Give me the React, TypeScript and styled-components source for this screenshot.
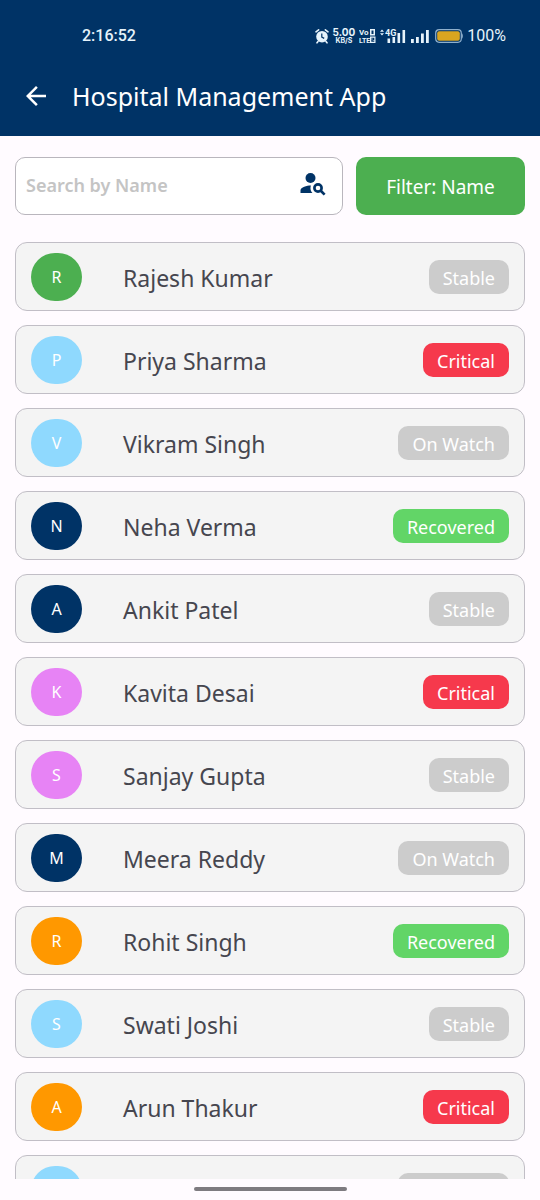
import React, { useState } from 'react';
import styled, { createGlobalStyle } from 'styled-components';
import { MdArrowBack } from 'react-icons/md';

const GlobalStyle = createGlobalStyle`
  *, *::before, *::after { box-sizing: border-box; }
  body {
    margin: 0;
    background: #fffbff;
    font-family: 'Noto Sans', 'Open Sans', sans-serif;
  }
`;

const Screen = styled.div`
  display: flex;
  flex-direction: column;
  height: 100vh;
  overflow: hidden;
`;

const Header = styled.header`
  flex: none;
  background: #003366;
  color: #ffffff;
`;

const StatusBar = styled.div`
  display: flex;
  align-items: center;
  justify-content: space-between;
  height: 56px;
  padding: 16px 34px 0 82px;
  font-family: Roboto, sans-serif;
  font-size: 16px;
  line-height: 20px;
  color: #e6f3fb;
`;

const Clock = styled.span`
  font-weight: 500;
`;

const StatusIcons = styled.div`
  display: flex;
  align-items: center;
  gap: 4px;
`;

const Speed = styled.div`
  display: flex;
  flex-direction: column;
  align-items: center;
  font-family: Inter, sans-serif;
  font-weight: 700;
  font-size: 7px;
  line-height: 7px;
`;

const SpeedValue = styled.span`
  font-size: 10px;
  line-height: 9px;
`;

const TitleBar = styled.div`
  display: flex;
  align-items: center;
  gap: 21px;
  height: 80px;
  padding: 0 21px;
`;

const BackButton = styled.button`
  display: flex;
  padding: 0;
  border: 0;
  background: none;
  color: inherit;
  cursor: pointer;
`;

const Title = styled.h1`
  margin: 0;
  font-size: 25px;
  line-height: 32px;
  font-weight: 400;
`;

const Toolbar = styled.div`
  flex: none;
  display: flex;
  gap: 13px;
  padding: 21px 15px 27px;
`;

const SearchBox = styled.label`
  flex: 1;
  min-width: 0;
  display: flex;
  align-items: center;
  height: 58px;
  padding: 0 14px 2px 10px;
  border: 1px solid #b9b6bd;
  border-radius: 10px;
  background: #ffffff;
  color: #003366;
`;

const SearchInput = styled.input`
  flex: 1;
  min-width: 0;
  padding: 0;
  border: 0;
  outline: 0;
  background: none;
  font: 600 18px/24px 'Noto Sans', sans-serif;
  color: #46464f;
  &::placeholder { color: #c4c4c4; opacity: 1; }
`;

const SearchIcon = styled.svg`
  flex: none;
  margin-bottom: 4px;
`;

const FilterButton = styled.button`
  width: 169px;
  height: 58px;
  padding: 2px 0 0;
  border: 0;
  border-radius: 10px;
  background: #4caf50;
  color: #ffffff;
  font: 400 19px/24px 'Noto Sans', sans-serif;
  cursor: pointer;
`;

const PatientList = styled.ul`
  flex: 1;
  min-height: 0;
  display: flex;
  flex-direction: column;
  gap: 14px;
  margin: 0;
  padding: 0 15px;
  list-style: none;
  overflow-y: auto;
  scrollbar-width: none;
`;

const PatientCard = styled.li`
  flex: none;
  display: flex;
  align-items: center;
  height: 69px;
  padding: 0 15px;
  border: 1px solid #c1bec6;
  border-radius: 12px;
  background: #f4f4f4;
`;

const Avatar = styled.span<{ $color: string }>`
  flex: none;
  display: flex;
  align-items: center;
  justify-content: center;
  width: 51px;
  height: 48px;
  border-radius: 24px;
  background: ${(p) => p.$color};
  color: #ffffff;
  font-size: 16px;
  line-height: 20px;
`;

const PatientName = styled.span`
  flex: 1;
  padding: 2px 0 0 41px;
  font-size: 23px;
  line-height: 32px;
  color: #46464f;
`;

const statusColors = {
  Stable: '#cccccc',
  'On Watch': '#cccccc',
  Critical: '#f6394c',
  Recovered: '#62d567',
};

type Status = keyof typeof statusColors;

const StatusBadge = styled.span<{ $status: Status }>`
  height: 34px;
  padding: 0 14px;
  border-radius: 10px;
  background: ${(p) => statusColors[p.$status]};
  color: #ffffff;
  font-size: 18px;
  line-height: 36px;
`;

const BottomBar = styled.footer`
  flex: none;
  display: flex;
  justify-content: center;
  align-items: center;
  height: 21px;
  padding-bottom: 2px;
`;

const HomeIndicator = styled.div`
  width: 153px;
  height: 4px;
  border-radius: 2px;
  background: #7e7b80;
`;

const patients: { name: string; color: string; status: Status }[] = [
  { name: 'Rajesh Kumar', color: '#4caf50', status: 'Stable' },
  { name: 'Priya Sharma', color: '#8fd9fe', status: 'Critical' },
  { name: 'Vikram Singh', color: '#8fd9fe', status: 'On Watch' },
  { name: 'Neha Verma', color: '#003366', status: 'Recovered' },
  { name: 'Ankit Patel', color: '#003366', status: 'Stable' },
  { name: 'Kavita Desai', color: '#e783f5', status: 'Critical' },
  { name: 'Sanjay Gupta', color: '#e783f5', status: 'Stable' },
  { name: 'Meera Reddy', color: '#003366', status: 'On Watch' },
  { name: 'Rohit Singh', color: '#ff9800', status: 'Recovered' },
  { name: 'Swati Joshi', color: '#8fd9fe', status: 'Stable' },
  { name: 'Arun Thakur', color: '#ff9800', status: 'Critical' },
  { name: '', color: '#8fd9fe', status: 'On Watch' },
];

const AlarmIcon = () => (
  <svg width="14" height="16" viewBox="0 0 14 16" aria-hidden="true">
    <circle cx="7" cy="8.7" r="5.8" fill="#e6f3fb" />
    <path d="M1 3.800 3.600 1.800M13 3.800 10.400 1.800M3 13.500 2 14.800M11 13.500l1 1.300" stroke="#e6f3fb" strokeWidth="1.600" strokeLinecap="round" />
    <path d="M6.800 5.500v3.600l2.400 1.300" fill="none" stroke="#003366" strokeWidth="1.200" />
  </svg>
);

const VolteIcon = () => (
  <svg width="17" height="16" viewBox="0 0 17 16" fill="#e6f3fb" fontFamily="Roboto, sans-serif" fontWeight="700" fontSize="8" aria-hidden="true">
    <text x="0" y="7">Vo</text>
    <text x="0" y="15" fontSize="7">LTE</text>
    <path fillRule="evenodd" d="M11 1h5v6.500h-5zM12.500 2.500v3.500h2v-3.500zM11 8.500h5.500V15H11zM12.300 9.700v1h1.700v.6h-1.700v2.500h3v-1h-1.700v-.6h1.700V9.700z" />
  </svg>
);

const MobileSignal = () => (
  <svg width="27" height="16" viewBox="0 0 27 16" fill="#e6f3fb" aria-hidden="true">
    <path d="M0 3.800 2 1.400 4 3.800zM0 5.200h4L2 7.600z" />
    <text x="5" y="7.500" fontFamily="Roboto, sans-serif" fontSize="9" fontWeight="700">4G</text>
    <path d="M7.500 10.500h2.600V15H7.500zM12.500 9h2.600v6h-2.600zM17.500 5h2.600v10h-2.600zM22.500 2h2.600v13h-2.600z" />
  </svg>
);

const Signal = () => (
  <svg width="20" height="16" viewBox="0 0 20 16" fill="#e6f3fb" aria-hidden="true">
    <path d="M0 11h2.800v4H0zM5 9h2.800v6H5zM10 5.500h2.800V15H10zM15 2h2.800v13H15z" />
  </svg>
);

const Battery = () => (
  <svg width="28" height="14" viewBox="0 0 28 14" aria-hidden="true">
    <rect x=".7" y=".7" width="25.600" height="12.600" rx="3.500" fill="none" stroke="#8fb0cc" strokeWidth="1.200" />
    <rect x="2.200" y="2.200" width="22.600" height="9.600" rx="2" fill="#d9a520" />
    <path d="M26.800 4.500q1.500 2.500 0 5z" fill="#8fb0cc" stroke="#8fb0cc" strokeWidth=".6" />
  </svg>
);

const PersonSearchIcon = () => (
  <SearchIcon width="30" height="30" viewBox="0 0 24 24" fill="currentColor" aria-hidden="true">
    <circle cx="10" cy="8" r="4" />
    <path d="M10.350 14.010C7.620 13.910 2 15.270 2 18v2h9.540c-2.470-2.760-1.230-5.890-1.190-5.990z" />
    <circle cx="16" cy="16" r="2.900" fill="none" stroke="currentColor" strokeWidth="2.100" />
    <path d="m18.200 18.200 3.100 3.100" stroke="currentColor" strokeWidth="2.100" />
  </SearchIcon>
);

export default function App() {
  const [query, setQuery] = useState('');
  const visible = patients.filter((p) => p.name.toLowerCase().includes(query.toLowerCase()));

  return (
    <Screen>
      <GlobalStyle />
      <Header>
        <StatusBar>
          <Clock>2:16:52</Clock>
          <StatusIcons>
            <AlarmIcon />
            <Speed>
              <SpeedValue>5.00</SpeedValue>
              <span>KB/S</span>
            </Speed>
            <VolteIcon />
            <MobileSignal />
            <Signal />
            <Battery />
            <span>100%</span>
          </StatusIcons>
        </StatusBar>
        <TitleBar>
          <BackButton aria-label="Back">
            <MdArrowBack size={30} />
          </BackButton>
          <Title>Hospital Management App</Title>
        </TitleBar>
      </Header>
      <Toolbar>
        <SearchBox>
          <SearchInput
            aria-label="Search by Name"
            placeholder="Search by Name"
            value={query}
            onChange={(e) => setQuery(e.target.value)}
          />
          <PersonSearchIcon />
        </SearchBox>
        <FilterButton>Filter: Name</FilterButton>
      </Toolbar>
      <PatientList>
        {visible.map((p, i) => (
          <PatientCard key={i}>
            <Avatar $color={p.color}>{p.name.charAt(0)}</Avatar>
            <PatientName>{p.name}</PatientName>
            <StatusBadge $status={p.status}>{p.status}</StatusBadge>
          </PatientCard>
        ))}
      </PatientList>
      <BottomBar>
        <HomeIndicator />
      </BottomBar>
    </Screen>
  );
}
